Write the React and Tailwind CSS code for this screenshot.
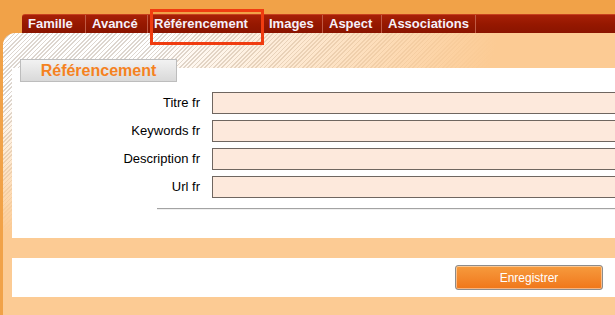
import React from "react";

const tabs = [
	{ label: "Famille", w: "w-[64px]" },
	{ label: "Avancé", w: "w-[62px]" },
	{ label: "Référencement", w: "w-[115px]" },
	{ label: "Images", w: "w-[60px]" },
	{ label: "Aspect", w: "w-[59px]" },
	{ label: "Associations", w: "w-[94px]" },
];

const fields = ["Titre fr", "Keywords fr", "Description fr", "Url fr"];

export default function App() {
	return (
		<div className="relative w-[615px] h-[315px] overflow-hidden bg-[#f1a248] font-['Liberation_Sans',Arial,sans-serif]">
			{/* Tab bar */}
			<div className="h-[33px] pt-[14px] pl-[22px]">
				<div className="flex h-[19px] rounded-tl-[3px] border-t border-[#c8401e] bg-gradient-to-b from-[#a82008] via-[#961800] to-[#8a1400]">
					{tabs.map((t) => (
						<div
							key={t.label}
							className={`${t.w} h-full shrink-0 border-r border-[#c05a44] pl-[6px] text-[13px] font-bold leading-[18px] text-[#f6f0fa] whitespace-nowrap`}
						>
							{t.label}
						</div>
					))}
				</div>
			</div>

			{/* Content panel */}
			<div className="ml-[3px] h-[282px] rounded-tl-[12px] bg-[#fccb94] bg-[image:radial-gradient(520px_210px_at_0_0,rgba(252,203,148,0)_30%,#fccb94_95%),repeating-linear-gradient(135deg,#ffffff_0px,#ffffff_1.8px,#ddd6cf_1.8px,#ddd6cf_3px)] pl-[9px] pt-[26px]">
				<div className="relative z-10 ml-[8px] w-[157px] h-[23px] border border-[#bdbdbd] bg-gradient-to-b from-[#f2f2f2] to-[#d9d9d9] text-center text-[16px] font-bold leading-[21px] text-[#f5821f]">
					Référencement
				</div>
				<div className="-mt-[14px] h-[170px] bg-white pt-[24px]">
					<div className="flex flex-col gap-[6px]">
						{fields.map((f) => (
							<div key={f} className="flex items-center h-[22px]">
								<div className="w-[188px] shrink-0 text-right text-[13px] text-black">{f}</div>
								<div className="ml-[12px] w-[420px] shrink-0 h-[22px] border border-[#6f6660] bg-[#fde9dc]" />
							</div>
						))}
					</div>
					<div className="mt-[10px] ml-[145px] h-[2px] border-t border-[#a3a3a3] bg-[#f0f0f0]" />
				</div>
				<div className="mt-[20px] h-[39px] bg-white flex justify-end pt-[7px] pr-[12px]">
					<button className="w-[148px] h-[25px] rounded-[3px] border border-[#8c8c8c] bg-gradient-to-b from-[#f69b3d] to-[#f07618] shadow-[inset_0_0_0_1px_rgba(255,255,255,0.45)] text-[12px] text-white">
						Enregistrer
					</button>
				</div>
			</div>

			{/* Highlight marker */}
			<div className="absolute left-[150px] top-[9px] w-[114px] h-[36px] border-[3px] border-[#f03c10]" />
		</div>
	);
}
